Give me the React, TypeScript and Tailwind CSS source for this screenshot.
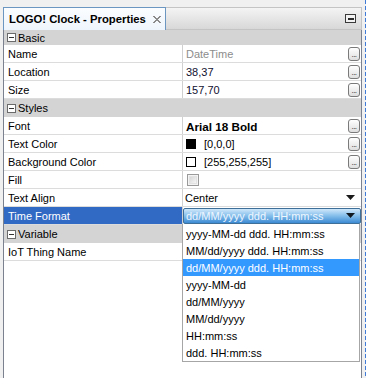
import React from 'react';

const dropdownItems = [
  'yyyy-MM-dd ddd. HH:mm:ss',
  'MM/dd/yyyy ddd. HH:mm:ss',
  'dd/MM/yyyy ddd. HH:mm:ss',
  'yyyy-MM-dd',
  'dd/MM/yyyy',
  'MM/dd/yyyy',
  'HH:mm:ss',
  'ddd. HH:mm:ss',
];

function Ellipsis() {
  return (
    <div className="ml-auto mr-[1px] -mt-[2px] w-[12px] h-[14px] rounded-[3px] border border-[#7a7a7a] bg-gradient-to-b from-white to-[#dedede] flex items-end justify-center pb-[1px]">
      <span className="text-[8px] leading-none text-[#202020] tracking-[-0.5px]">...</span>
    </div>
  );
}

function Arrow() {
  return (
    <svg width="9" height="5" viewBox="0 0 9 5" className="ml-auto mr-[6px] -mt-[2px]">
      <path d="M0 0 H9 L4.5 5 Z" fill="#1a1a1a" />
    </svg>
  );
}

function Category({ title, h = 'h-[18px]' }: { title: string; h?: string }) {
  return (
    <div className={`${h} bg-[#d4d4d4] flex items-center`}>
      <div className="ml-[3px] w-[9px] h-[9px] border border-[#6a6a6a] bg-white flex items-center justify-center">
        <div className="w-[5px] h-[1px] bg-[#333]" />
      </div>
      <span className="ml-[2px] pt-[1px] text-black">{title}</span>
    </div>
  );
}

function Row({ label, selected, children }: { label: string; selected?: boolean; children?: React.ReactNode }) {
  return (
    <div className="flex h-[18px] border-b border-[#dcdcdc]">
      <div className={`w-[179px] shrink-0 border-r border-[#d0d0d0] pl-[4px] pt-[2px] flex items-center ${selected ? 'bg-[#316ac5] text-white' : 'text-black'}`}>
        {label}
      </div>
      <div className="relative flex-1 flex items-center pl-[3px] pt-[2px]">{children}</div>
    </div>
  );
}

export default function App() {
  return (
    <div className="w-[369px] h-[378px] bg-[#f0f0f0] flex overflow-hidden text-[11px] leading-none" style={{ fontFamily: '"Liberation Sans", Arial, sans-serif' }}>
      <div className="w-[362px] shrink-0 pl-[3px] pt-[7px] flex flex-col">
        {/* header */}
        <div className="h-[23px] flex">
          <div className="w-[163px] shrink-0 border border-b-0 border-[#6c96c2] bg-gradient-to-b from-[#fbfdff] to-[#eef5fc] flex items-center pl-[5px] pt-[1px]">
            <span className="font-bold text-[11.3px] text-black">LOGO! Clock - Properties</span>
            <svg width="8" height="7" viewBox="0 0 8 7" className="ml-[7px]">
              <g fill="#8a8a8a">
                <rect x="0" y="0" width="2" height="1" /><rect x="6" y="0" width="2" height="1" />
                <rect x="1" y="1" width="2" height="1" /><rect x="5" y="1" width="2" height="1" />
                <rect x="2" y="2" width="4" height="1" />
                <rect x="3" y="3" width="2" height="1" />
                <rect x="2" y="4" width="4" height="1" />
                <rect x="1" y="5" width="2" height="1" /><rect x="5" y="5" width="2" height="1" />
                <rect x="0" y="6" width="2" height="1" /><rect x="6" y="6" width="2" height="1" />
              </g>
            </svg>
          </div>
          <div className="flex-1 border-t border-r border-b border-[#c4c4c4] bg-gradient-to-b from-[#f4f4f4] to-[#d8d8d8] flex items-center justify-end pr-[5px]">
            <div className="w-[11px] h-[9px] border border-[#3a3a3a] bg-[#f2f2f2] flex items-center justify-center">
              <div className="w-[6px] h-[2px] bg-[#2a2a2a]" />
            </div>
          </div>
        </div>

        {/* grid */}
        <div className="flex-1 flex flex-col bg-white border-l border-r border-[#7c8190]">
          <Category title="Basic" h="h-[15px]" />
          <Row label="Name">
            <span className="text-[#8c8c8c]">DateTime</span>
            <Ellipsis />
          </Row>
          <Row label="Location">
            <span className="text-[#101030]">38,37</span>
            <Ellipsis />
          </Row>
          <Row label="Size">
            <span className="text-[#101030]">157,70</span>
            <Ellipsis />
          </Row>
          <Category title="Styles" />
          <Row label="Font">
            <span className="font-bold text-[11.7px] text-black">Arial 18 Bold</span>
            <Ellipsis />
          </Row>
          <Row label="Text Color">
            <div className="-mt-[2px] w-[10px] h-[10px] bg-black" />
            <span className="ml-[8px] text-black">[0,0,0]</span>
            <Ellipsis />
          </Row>
          <Row label="Background Color">
            <div className="-mt-[2px] w-[10px] h-[10px] border border-black bg-white" />
            <span className="ml-[8px] text-black">[255,255,255]</span>
            <Ellipsis />
          </Row>
          <Row label="Fill">
            <div className="-mt-[2px] ml-[1px] w-[12px] h-[12px] border border-[#9a9a9a] bg-[#f4f4f4] flex items-center justify-center">
              <div className="w-[8px] h-[8px] bg-gradient-to-br from-[#d6d6d6] to-[#f6f6f6] border border-[#e2e2e2]" />
            </div>
          </Row>
          <Row label="Text Align">
            <span className="-ml-[1px] text-black">Center</span>
            <Arrow />
          </Row>
          <div className="flex h-[18px] border-b border-[#dcdcdc]">
            <div className="w-[179px] shrink-0 border-r border-[#d0d0d0] pl-[4px] pt-[2px] flex items-center bg-[#316ac5] text-white">Time Format</div>
            <div className="relative flex-1 flex items-center">
              <div className="h-[16px] flex-1 rounded-[2px] border border-[#3d6f98] bg-gradient-to-b from-[#cfe7fa] via-[#82bdea] to-[#3b8ad3] flex items-center pl-[2px]">
                <span className="pt-[1px] text-[#eef6ff]">dd/MM/yyyy ddd. HH:mm:ss</span>
                <svg width="9" height="5" viewBox="0 0 9 5" className="ml-auto mr-[5px]">
                  <path d="M0 0 H9 L4.5 5 Z" fill="#101820" />
                </svg>
              </div>
              <div className="absolute z-10 left-[-1px] top-[17px] w-[178px] bg-white border-l border-r border-b border-[#a6a6a6] pt-[1px]">
                {dropdownItems.map((item, i) => (
                  <div key={item} className={`h-[17px] flex items-center pl-[3px] pt-[1px] ${i === 2 ? 'bg-[#3399ff] text-white' : 'text-black'}`}>
                    {item}
                  </div>
                ))}
              </div>
            </div>
          </div>
          <Category title="Variable" />
          <Row label="IoT Thing Name" />
          <div className="flex-1" />
        </div>
      </div>
      <div className="w-[3px] shrink-0" />
      <svg width="1" height="378" className="shrink-0">
        <line x1="0.5" y1="0" x2="0.5" y2="378" stroke="#3f7ad6" strokeDasharray="4 2" />
      </svg>
      <div className="flex-1 bg-white" />
    </div>
  );
}
